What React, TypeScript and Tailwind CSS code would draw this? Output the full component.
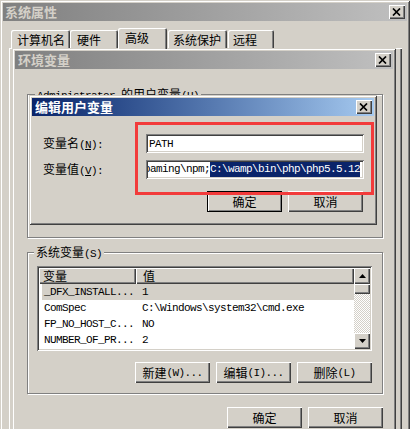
import React from "react";

const frame =
  "shadow-[inset_1px_1px_0_#d4d0c8,inset_-1px_-1px_0_#404040,inset_2px_2px_0_#ffffff,inset_-2px_-2px_0_#808080]";
const raised =
  "shadow-[inset_1px_1px_0_#ffffff,inset_-1px_-1px_0_#404040,inset_-2px_-2px_0_#808080]";
const sunken =
  "shadow-[inset_1px_1px_0_#808080,inset_-1px_-1px_0_#ffffff,inset_2px_2px_0_#404040,inset_-2px_-2px_0_#d4d0c8]";

function M({ children }: { children: React.ReactNode }) {
  return (
    <span className="font-['Liberation_Mono',monospace] text-[11px] tracking-[-0.6px]">
      {children}
    </span>
  );
}

function CloseBtn() {
  return (
    <div className={`w-[16px] h-[14px] bg-[#d4d0c8] flex items-center justify-center ${raised}`}>
      <svg width="9" height="8" viewBox="0 0 9 8" className="-mt-[1px] -ml-[1px]">
        <path d="M1 0.5L8 7.5M8 0.5L1 7.5" stroke="#000" strokeWidth="1.7" />
      </svg>
    </div>
  );
}

function Btn({ children, cls }: { children: React.ReactNode; cls: string }) {
  return (
    <div className={`h-[21px] bg-[#d4d0c8] flex items-center justify-center leading-[12px] whitespace-nowrap ${cls}`}>
      {children}
    </div>
  );
}

function Arrow({ down }: { down?: boolean }) {
  return (
    <svg width="7" height="4" viewBox="0 0 7 4">
      {down ? (
        <path d="M0 0H7L3.5 4Z" fill="#000" />
      ) : (
        <path d="M3.5 0L7 4H0Z" fill="#000" />
      )}
    </svg>
  );
}

const rows: [string, string][] = [
  ["_DFX_INSTALL...", "1"],
  ["ComSpec", "C:\\Windows\\system32\\cmd.exe"],
  ["FP_NO_HOST_C...", "NO"],
  ["NUMBER_OF_PR...", "2"],
];

const tabCls =
  "h-[18px] pt-[3px] rounded-t-[2px] shadow-[inset_1px_1px_0_#ffffff,inset_-1px_0_0_#404040,inset_-2px_0_0_#808080]";

export default function App() {
  return (
    <div className="relative w-[410px] h-[429px] overflow-hidden bg-[#d4d0c8] font-['Noto_Sans_CJK_SC',sans-serif] text-[12px] leading-[14px] text-black select-none">
      {/* 系统属性 window */}
      <div className={`absolute left-0 top-0 w-[410px] h-[470px] bg-[#d4d0c8] p-[3px] flex flex-col ${frame}`}>
        <div className="h-[18px] flex items-center justify-between bg-gradient-to-r from-[#808080] to-[#c0c0c0] pl-[2px] pr-[2px]">
          <span className="font-bold text-[#d4d0c8] leading-[14px] text-[13px]">系统属性</span>
          <CloseBtn />
        </div>
        <div className="flex items-end h-[27px] pl-[8px] text-[12px]">
          <div className={`w-[59px] pl-[6px] ${tabCls}`}>计算机名</div>
          <div className={`w-[48px] pl-[7px] ${tabCls}`}>硬件</div>
          <div className="relative z-10 -mb-[1px] w-[49px] h-[21px] pl-[7px] pt-[3px] bg-[#d4d0c8] rounded-t-[2px] shadow-[inset_1px_1px_0_#ffffff,inset_-1px_0_0_#404040,inset_-2px_0_0_#808080]">
            高级
          </div>
          <div className={`ml-[1px] w-[59px] pl-[5px] ${tabCls}`}>系统保护</div>
          <div className={`ml-[1px] w-[46px] pl-[5px] ${tabCls}`}>远程</div>
        </div>
        <div className={`ml-[6px] w-[393px] flex-1 bg-[#d4d0c8] ${raised}`} />
      </div>

      {/* 环境变量 window */}
      <div className={`absolute left-[12px] top-[48px] w-[384px] h-[420px] bg-[#d4d0c8] p-[3px] flex flex-col ${frame}`}>
        <div className="h-[18px] flex items-center justify-between bg-gradient-to-r from-[#808080] to-[#c0c0c0] pl-[3px] pr-[2px]">
          <span className="font-bold text-[#d4d0c8] leading-[14px] text-[13px]">环境变量</span>
          <CloseBtn />
        </div>

        {/* user variables group */}
        <div className="relative ml-[12px] mt-[25px] w-[356px] h-[144px] border border-[#808080] shadow-[1px_1px_0_#ffffff,inset_1px_1px_0_#ffffff] flex flex-col">
          <span className="absolute left-[7px] -top-[7px] px-[2px] bg-[#d4d0c8] leading-[12px] whitespace-nowrap">
            <M>Administrator </M>的用户变量<M>(U)</M>
          </span>
          <div className={`ml-[9px] mt-[8px] w-[335px] h-[90px] bg-white ${sunken}`} />
          <div className="flex justify-end gap-[6px] pr-[10px] mt-[11px]">
            <Btn cls={`w-[75px] ${raised}`}>新建<M>(U)...</M></Btn>
            <Btn cls={`w-[75px] ${raised}`}>编辑<M>(E)...</M></Btn>
            <Btn cls={`w-[75px] ${raised}`}>删除<M>(D)</M></Btn>
          </div>
        </div>

        {/* system variables group */}
        <div className="relative ml-[12px] mt-[14px] w-[356px] h-[142px] border border-[#808080] shadow-[1px_1px_0_#ffffff,inset_1px_1px_0_#ffffff] flex flex-col">
          <span className="absolute left-[6px] -top-[7px] px-[2px] bg-[#d4d0c8] leading-[12px] whitespace-nowrap">
            系统变量<M>(S)</M>
          </span>
          <div className={`ml-[9px] mt-[13px] w-[335px] h-[85px] bg-white p-[2px] flex ${sunken}`}>
            <div className="flex-1 flex flex-col overflow-hidden">
              <div className="flex h-[16px] shrink-0">
                <div className={`w-[97px] h-[16px] pl-[4px] flex items-center bg-[#d4d0c8] leading-[12px] ${raised}`}>
                  变量
                </div>
                <div className={`flex-1 h-[16px] pl-[7px] flex items-center bg-[#d4d0c8] leading-[12px] ${raised}`}>
                  值
                </div>
              </div>
              {rows.map(([k, v], i) => (
                <div
                  key={k}
                  className={`ml-[3px] h-[16px] shrink-0 flex items-center font-['Liberation_Mono',monospace] text-[11px] tracking-[-0.6px] whitespace-nowrap ${
                    i === 0 ? "bg-[#d4d0c8]" : "bg-white"
                  }`}
                >
                  <span className="w-[100px] pl-[2px]">{k}</span>
                  <span>{v}</span>
                </div>
              ))}
            </div>
            <div className="w-[16px] flex flex-col">
              <div className={`h-[16px] shrink-0 bg-[#d4d0c8] flex items-center justify-center ${raised}`}>
                <Arrow />
              </div>
              <div className={`h-[10px] shrink-0 bg-[#d4d0c8] ${raised}`} />
              <div className="flex-1 bg-[image:repeating-conic-gradient(#ffffff_0%_25%,#d4d0c8_0%_50%)] bg-[length:2px_2px]" />
              <div className={`h-[16px] shrink-0 bg-[#d4d0c8] flex items-center justify-center ${raised}`}>
                <Arrow down />
              </div>
            </div>
          </div>
          <div className="flex justify-end gap-[6px] pr-[10px] mt-[11px]">
            <Btn cls={`w-[75px] ${raised}`}>新建<M>(W)...</M></Btn>
            <Btn cls={`w-[75px] ${raised}`}>编辑<M>(I)...</M></Btn>
            <Btn cls={`w-[75px] ${raised}`}>删除<M>(L)</M></Btn>
          </div>
        </div>

        <div className="flex justify-end gap-[6px] pr-[10px] mt-[13px]">
          <Btn cls={`w-[75px] ${raised}`}>确定</Btn>
          <Btn cls={`w-[75px] ${raised}`}>取消</Btn>
        </div>
      </div>

      {/* 编辑用户变量 dialog */}
      <div className={`absolute left-[29px] top-[95px] w-[348px] h-[130px] bg-[#d4d0c8] p-[3px] flex flex-col ${frame}`}>
        <div className="h-[18px] shrink-0 flex items-center justify-between bg-gradient-to-r from-[#0a246a] to-[#a6caf0] pl-[3px] pr-[2px]">
          <span className="font-bold text-white leading-[14px] text-[13px]">编辑用户变量</span>
          <CloseBtn />
        </div>
        <div className="flex flex-col pl-[11px]">
          <div className="flex items-center mt-[18px] h-[19px]">
            <span className="w-[103px] leading-[12px] whitespace-nowrap">
              变量名<M>(<u>N</u>):</M>
            </span>
            <div className={`w-[218px] h-[19px] bg-white p-[2px] pl-[3px] flex items-center ${sunken}`}>
              <M>PATH</M>
            </div>
          </div>
          <div className="flex items-center mt-[7px] h-[19px]">
            <span className="w-[103px] leading-[12px] whitespace-nowrap">
              变量值<M>(<u>V</u>):</M>
            </span>
            <div className={`w-[218px] h-[19px] bg-white p-[2px] flex items-center overflow-hidden ${sunken}`}>
              <div className="h-[15px] flex items-center whitespace-nowrap overflow-hidden w-full font-['Liberation_Mono',monospace] text-[11px] tracking-[-0.6px] leading-[15px]">
                <span className="-ml-[4px]">oaming\npm;</span>
                <span className="bg-[#0a246a] text-white">C:\wamp\bin\php\php5.5.12</span>
              </div>
            </div>
          </div>
          <div className="flex justify-end gap-[6px] pr-[11px] mt-[12px]">
            <Btn cls="w-[75px] border border-black shadow-[inset_1px_1px_0_#ffffff,inset_-1px_-1px_0_#808080]">确定</Btn>
            <Btn cls={`w-[75px] ${raised}`}>取消</Btn>
          </div>
        </div>
      </div>

      {/* red annotation */}
      <div className="absolute left-[135px] top-[122px] w-[239px] h-[73px] border-[3px] border-[#f23b3b]" />
    </div>
  );
}
